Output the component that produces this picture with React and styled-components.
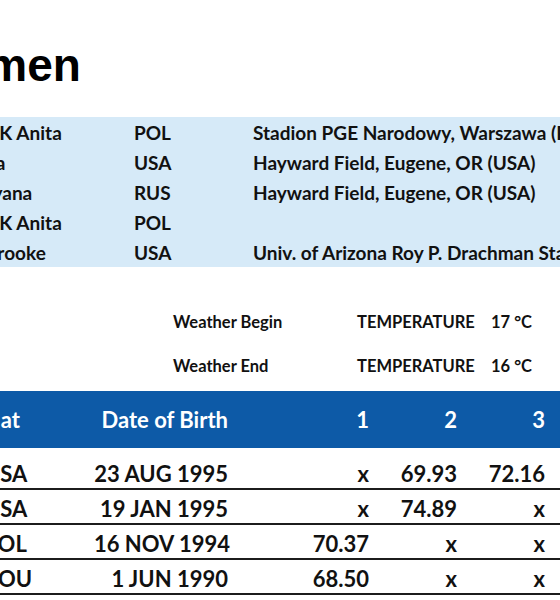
import React from "react";
import styled, { createGlobalStyle } from "styled-components";

const Global = createGlobalStyle`
  html, body { margin: 0; padding: 0; background: #ffffff; overflow: hidden; }
  body { font-family: Lato, "Noto Sans", sans-serif; color: #111111; }
`;

/* The window shows a scrolled part of a wide results sheet */
const Viewport = styled.div`
  width: 560px;
  height: 600px;
  overflow: hidden;
`;

const Sheet = styled.div`
  width: 1500px;
  margin-left: -440px;
  padding: 8px;
  box-sizing: border-box;
`;

const Title = styled.h1`
  margin: 34px 0 0 0;
  font-family: "Liberation Sans", Arial, sans-serif;
  font-weight: 700;
  font-size: 46px;
  line-height: 46px;
  color: #000;
`;

const Records = styled.div`
  margin-top: 29px;
  background: #d6eaf8;
  display: grid;
  grid-template-columns: 150px 161px 255px 119px 460px 160px;
`;

const RecCell = styled.div`
  height: 30px;
  line-height: 32px;
  font-size: 19px;
  font-weight: 700;
  white-space: nowrap;
  overflow: hidden;
`;

const Weather = styled.div`
  margin: 33px 0 0 605px;
  display: grid;
  grid-template-columns: 184px 134px 120px;
`;

const WCell = styled.div`
  height: 44px;
  line-height: 44px;
  font-size: 16.5px;
  font-weight: 700;
  white-space: nowrap;
`;

const COLS = "80px 90px 246px 110px 144px 141px 88px 88px 88px 88px 88px 100px";

const Results = styled.div`
  margin-top: 3px;
`;

const HeadRow = styled.div`
  display: grid;
  grid-template-columns: ${COLS};
  height: 57px;
  background: #0d5aa7;
  color: #ffffff;
  align-items: center;
`;

const HeadCell = styled.div`
  font-size: 22px;
  font-weight: 700;
  text-align: ${(p) => (p.$right ? "right" : "left")};
  padding-right: ${(p) => (p.$right ? "10px" : "0")};
  white-space: nowrap;
`;

const Body = styled.div`
  margin-top: 7px;
`;

const Row = styled.div`
  display: grid;
  grid-template-columns: ${COLS};
  height: 35px;
  box-sizing: border-box;
  border-bottom: 2px solid #1c1c1c;
  align-items: center;
`;

const Cell = styled.div`
  font-size: 22px;
  font-weight: 700;
  padding-top: 3px;
  text-align: ${(p) => (p.$right ? "right" : "left")};
  padding-right: ${(p) => (p.$right ? "10px" : "0")};
  white-space: nowrap;
`;

const records = [
  ["WR", "82.98", "WLODARCZYK Anita", "POL", "Stadion PGE Narodowy, Warszawa (POL)", "28 AUG 2016"],
  ["AR", "80.31", "PRICE DeAnna", "USA", "Hayward Field, Eugene, OR (USA)", "26 JUN 2021"],
  ["CR", "78.51", "LYSENKO Tatyana", "RUS", "Hayward Field, Eugene, OR (USA)", "24 AUG 2013"],
  ["WL", "79.10", "WLODARCZYK Anita", "POL", "", ""],
  ["SB", "80.12", "ANDERSEN Brooke", "USA", "Univ. of Arizona Roy P. Drachman Stadium, Tucson, AZ (USA)", "18 MAY 2022"],
];

const results = [
  ["1", "1120", "ANDERSEN Brooke", "USA", "23 AUG 1995", "x", "69.93", "72.16", "75.20", "x", "78.96", "78.96"],
  ["2", "1134", "KASSANAVOID Janee'", "USA", "19 JAN 1995", "x", "74.89", "x", "76.41", "77.30", "x", "77.30"],
  ["3", "1187", "KOPRON Malwina", "POL", "16 NOV 1994", "70.37", "x", "x", "72.40", "x", "74.01", "74.01"],
  ["4", "1163", "GHELBER Bianca", "ROU", "1 JUN 1990", "68.50", "x", "x", "71.22", "70.05", "x", "71.22"],
];

const head = ["Rank", "Bib", "Name", "Nat", "Date of Birth", "1", "2", "3", "4", "5", "6", "Result"];

export default function App() {
  return (
    <>
      <Global />
      <Viewport>
        <Sheet>
          <Title>Hammer Throw Women</Title>
          <Records>
            {records.map((r, i) =>
              r.map((c, j) => <RecCell key={`${i}-${j}`}>{c}</RecCell>)
            )}
          </Records>
          <Weather>
            <WCell>Weather Begin</WCell>
            <WCell>TEMPERATURE</WCell>
            <WCell>17 °C</WCell>
            <WCell>Weather End</WCell>
            <WCell>TEMPERATURE</WCell>
            <WCell>16 °C</WCell>
          </Weather>
          <Results>
            <HeadRow>
              {head.map((h, i) => (
                <HeadCell key={i} $right={i >= 4}>{h}</HeadCell>
              ))}
            </HeadRow>
            <Body>
              {results.map((r, i) => (
                <Row key={i}>
                  {r.map((c, j) => (
                    <Cell key={j} $right={j >= 4 || j === 0}>{c}</Cell>
                  ))}
                </Row>
              ))}
            </Body>
          </Results>
        </Sheet>
      </Viewport>
    </>
  );
}
